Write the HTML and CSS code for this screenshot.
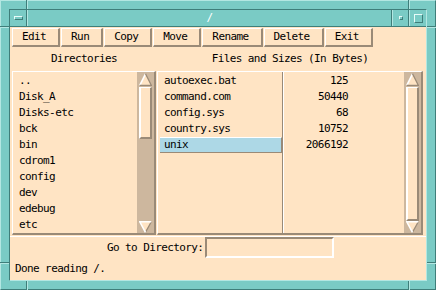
FILE: index.html
```html
<!DOCTYPE html>
<html>
<head>
<meta charset="utf-8">
<link rel="stylesheet" href="styles.css">
</head>
<body>
<div class="wm">
  <div class="notch nv n-tl"></div>
  <div class="notch nv n-tr"></div>
  <div class="notch nv n-bl"></div>
  <div class="notch nv n-br"></div>
  <div class="notch nh n-lt"></div>
  <div class="notch nh n-lb"></div>
  <div class="notch nh n-rt"></div>
  <div class="notch nh n-rb"></div>
  <div class="inner">
    <div class="titlebar">
      <div class="tb-btn tb-menu"><div class="menubar"></div></div>
      <div class="tb-title">/</div>
      <div class="tb-btn tb-min"><div class="minsq"></div></div>
      <div class="tb-btn tb-max"><div class="maxsq"></div></div>
    </div>
    <div class="app">
      <div class="btnrow">
        <div class="btn">Edit</div>
        <div class="btn">Run</div>
        <div class="btn">Copy</div>
        <div class="btn">Move</div>
        <div class="btn">Rename</div>
        <div class="btn">Delete</div>
        <div class="btn">Exit</div>
      </div>
      <div class="labels">
        <div class="lab-dir">Directories</div>
        <div class="lab-files">Files and Sizes (In Bytes)</div>
      </div>
      <div class="panels">
        <div class="panel dirpanel">
          <div class="list dirlist">
            <div class="row">..</div>
            <div class="row">Disk_A</div>
            <div class="row">Disks-etc</div>
            <div class="row">bck</div>
            <div class="row">bin</div>
            <div class="row">cdrom1</div>
            <div class="row">config</div>
            <div class="row">dev</div>
            <div class="row">edebug</div>
            <div class="row">etc</div>
          </div>
          <div class="sb">
            <svg class="arr" width="13" height="13" viewBox="0 0 13 13"><polygon points="6.5,1 12,12 1,12" fill="#ffe4c4"/><polyline points="0.8,12.3 6.5,0.8" stroke="#fff" stroke-width="1.6" fill="none"/><polyline points="6.5,0.8 12.3,12.3 0.8,12.3" stroke="#9a8a77" stroke-width="1.3" fill="none"/></svg>
            <div class="thumb thumb-dir"></div>
            <div class="sb-fill"></div>
            <svg class="arr" width="13" height="12" viewBox="0 0 13 12"><polygon points="1,1 12,1 6.5,11" fill="#ffe4c4"/><polyline points="6.5,11.3 12.3,0.8" stroke="#9a8a77" stroke-width="1.3" fill="none"/><polyline points="6.5,11.3 0.8,0.8 12.3,0.8" stroke="#fff" stroke-width="1.6" fill="none"/></svg>
          </div>
        </div>
        <div class="panel filespanel">
          <div class="list names">
            <div class="row frow">autoexec.bat</div>
            <div class="row frow">command.com</div>
            <div class="row frow">config.sys</div>
            <div class="row frow">country.sys</div>
            <div class="row frow sel">unix</div>
          </div>
          <div class="list sizes">
            <div class="row">125</div>
            <div class="row">50440</div>
            <div class="row">68</div>
            <div class="row">10752</div>
            <div class="row">2066192</div>
          </div>
          <div class="sb">
            <svg class="arr" width="13" height="13" viewBox="0 0 13 13"><polygon points="6.5,1 12,12 1,12" fill="#ffe4c4"/><polyline points="0.8,12.3 6.5,0.8" stroke="#fff" stroke-width="1.6" fill="none"/><polyline points="6.5,0.8 12.3,12.3 0.8,12.3" stroke="#9a8a77" stroke-width="1.3" fill="none"/></svg>
            <div class="thumb thumb-files"></div>
            <div class="sb-fill"></div>
            <svg class="arr" width="13" height="12" viewBox="0 0 13 12"><polygon points="1,1 12,1 6.5,11" fill="#ffe4c4"/><polyline points="6.5,11.3 12.3,0.8" stroke="#9a8a77" stroke-width="1.3" fill="none"/><polyline points="6.5,11.3 0.8,0.8 12.3,0.8" stroke="#fff" stroke-width="1.6" fill="none"/></svg>
          </div>
        </div>
      </div>
      <div class="lower">
        <div class="gorow">
          <div class="golabel">Go to Directory:</div>
          <div class="goinput"></div>
        </div>
        <div class="status">Done reading /.</div>
      </div>
    </div>
  </div>
</div>
</body>
</html>
```
FILE: styles.css
```css
* { box-sizing: border-box; }
body {
  margin: 0;
  background: #7acbc5;
  font-family: "DejaVu Sans Mono", monospace;
  font-size: 11px;
  letter-spacing: -0.6px;
  color: #000;
}
.wm {
  position: relative;
  width: 436px;
  height: 290px;
  background: #7acbc5;
  border: 1px solid;
  border-color: #b3e7e2 #3f7e7a #3f7e7a #b3e7e2;
  padding: 8px;
}
.notch { position: absolute; }
.nv { width: 2px; height: 9px; border-left: 1px solid #3f7e7a; border-right: 1px solid #b3e7e2; }
.nh { width: 9px; height: 2px; border-top: 1px solid #3f7e7a; border-bottom: 1px solid #b3e7e2; }
.n-tl { left: 25px; top: -1px; }
.n-tr { left: 407px; top: -1px; }
.n-bl { left: 25px; bottom: -1px; }
.n-br { left: 407px; bottom: -1px; }
.n-lt { left: -1px; top: 25px; }
.n-lb { left: -1px; top: 261px; }
.n-rt { right: -1px; top: 25px; }
.n-rb { right: -1px; top: 261px; }

.inner {
  height: 100%;
  border: 1px solid;
  border-color: #3f7e7a #b3e7e2 #b3e7e2 #3f7e7a;
  display: flex;
  flex-direction: column;
}
.titlebar {
  height: 17px;
  display: flex;
  border-bottom: 1px solid #3f7e7a;
  flex: none;
}
.tb-btn {
  width: 17px;
  display: flex;
  align-items: center;
  justify-content: center;
  border-left: 1px solid #b3e7e2;
  border-right: 1px solid #3f7e7a;
}
.tb-menu { border-left: none; width: 17px; }
.tb-max { border-right: none; }
.tb-title {
  flex: 1;
  text-align: center;
  color: #fff;
  line-height: 16px;
  border-left: 1px solid #b3e7e2;
  border-right: 1px solid #3f7e7a;
}
.menubar {
  width: 9px;
  height: 4px;
  border: 1px solid;
  border-color: #e6fbf8 #3f7e7a #3f7e7a #e6fbf8;
}
.minsq {
  width: 4px;
  height: 4px;
  border: 1px solid;
  border-color: #e6fbf8 #3f7e7a #3f7e7a #e6fbf8;
}
.maxsq {
  width: 9px;
  height: 9px;
  border: 1px solid;
  border-color: #e6fbf8 #3f7e7a #3f7e7a #e6fbf8;
}

.app {
  flex: 1;
  background: #ffe4c4;
  display: flex;
  flex-direction: column;
}
.btnrow {
  display: flex;
  gap: 1px;
  padding-left: 2px;
  margin-top: 1px;
  height: 19px;
}
.btn {
  height: 19px;
  line-height: 16px;
  padding: 0 12px 0 9px;
  border-top: 1px solid #fff;
  border-left: 1px solid #fff;
  border-right: 2px solid #9a8a77;
  border-bottom: 2px solid #9a8a77;
  white-space: nowrap;
}
.labels {
  display: flex;
  margin-top: 4px;
  padding-left: 2px;
  height: 16px;
  line-height: 16px;
}
.lab-dir { width: 144px; text-align: center; }
.lab-files { width: 266px; margin-left: 1px; text-align: center; }

.panels {
  display: flex;
  gap: 1px;
  margin-top: 4px;
  padding-left: 2px;
  height: 164px;
}
.panel {
  display: flex;
  border-top: 1px solid #fff;
  border-left: 1px solid #fff;
  border-right: 2px solid #9a8a77;
  border-bottom: 2px solid #9a8a77;
}
.dirpanel { width: 144px; }
.filespanel { width: 266px; }
.list { padding-top: 1px; }
.dirlist { flex: 1; padding-left: 6px; }
.row {
  height: 16px;
  line-height: 16px;
  white-space: nowrap;
}
.names {
  width: 125px;
  padding-left: 2px;
  border-right: 1px solid #9a8a77;
}
.frow { padding-left: 4px; }
.sel {
  background: #add8e6;
  border-top: 1px solid #fff;
  border-right: 1px solid #9a8a77;
  border-bottom: 1px solid #9a8a77;
  line-height: 14px;
}
.sizes {
  width: 121px;
  border-left: 1px solid #fff;
  padding-right: 56px;
  text-align: right;
}
.sb {
  width: 17px;
  background: #cdb79e;
  display: flex;
  flex-direction: column;
  padding: 1px 2px 0 2px;
}
.arr { display: block; flex: none; }
.thumb {
  flex: none;
  margin-top: 1px;
  width: 13px;
  background: #ffe4c4;
  border-top: 1px solid #fff;
  border-left: 2px solid #fff;
  border-right: 2px solid #9a8a77;
  border-bottom: 2px solid #9a8a77;
}
.thumb-dir { height: 52px; }
.thumb-files { height: 134px; }
.sb-fill { flex: 1; }

.lower {
  margin-top: 1px;
  border-top: 1px solid #fff;
}
.gorow {
  display: flex;
  align-items: center;
  height: 21px;
  padding-left: 97px;
}
.golabel { width: 98px; white-space: nowrap; }
.goinput {
  width: 129px;
  height: 21px;
  border: 2px solid;
  border-color: #9a8a77 #fff #fff #9a8a77;
}
.status {
  margin-top: 3px;
  padding-left: 5px;
  height: 16px;
  line-height: 16px;
}
```
